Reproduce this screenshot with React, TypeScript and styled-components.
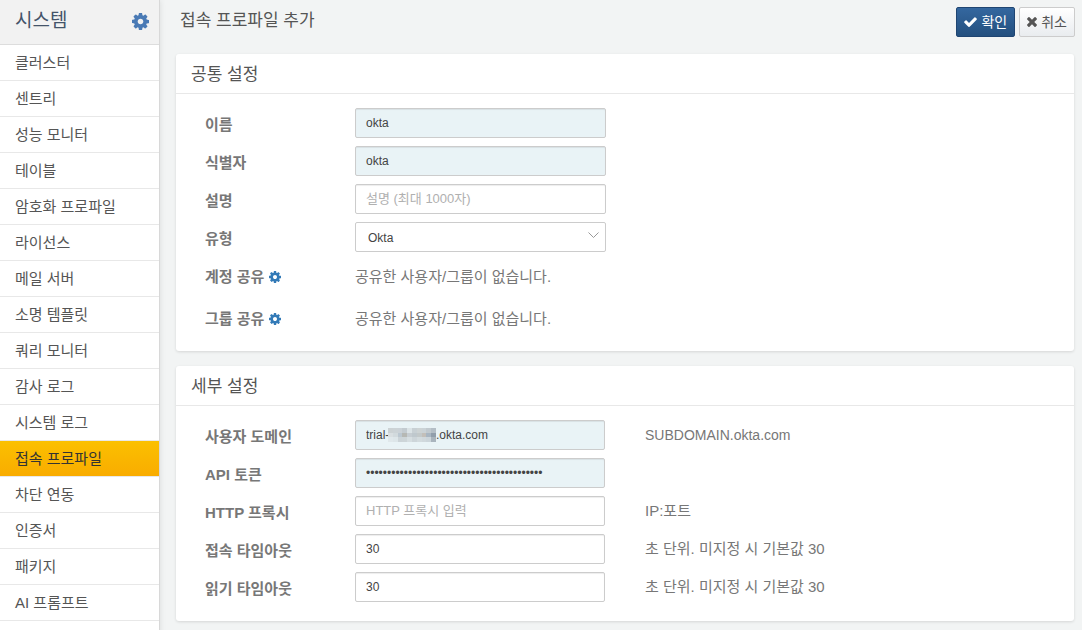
import React from 'react';
import styled, { createGlobalStyle } from 'styled-components';

const GlobalStyle = createGlobalStyle`
  * { box-sizing: border-box; }
  body {
    margin: 0;
    background: #f2f4f4;
    color: #555;
    font-family: "Liberation Sans", "Noto Sans CJK KR", sans-serif;
    font-size: 15px;
  }
  button, input, select { font-family: inherit; }
`;

const Page = styled.div`
  display: flex;
  min-height: 100vh;
`;

const Sidebar = styled.nav`
  flex: 0 0 160px;
  background: #fff;
  border-right: 1px solid #d8d8d8;
  box-shadow: 0 0 6px rgba(0, 0, 0, 0.1);
`;

const SidebarHeader = styled.div`
  display: flex;
  align-items: center;
  justify-content: space-between;
  height: 45px;
  padding: 0 10px 2px 15px;
  background: #f2f2f2;
  border-bottom: 1px solid #ddd;
`;

const SidebarTitle = styled.h2`
  margin: 0;
  font-size: 19px;
  font-weight: 400;
  line-height: 24px;
  color: #44546a;
`;

const IconButton = styled.button<{ $color: string }>`
  display: inline-flex;
  padding: 0;
  border: 0;
  background: none;
  color: ${(p) => p.$color};
  cursor: pointer;
`;

const Menu = styled.ul`
  margin: 0;
  padding: 0;
  list-style: none;
`;

const MenuLink = styled.a<{ $active: boolean }>`
  display: flex;
  align-items: center;
  height: 36px;
  padding: 0 15px 2px;
  border-bottom: 1px solid #e8e8e8;
  background: ${(p) => (p.$active ? 'linear-gradient(#fbc000, #f9ac00)' : '#fff')};
  color: ${(p) => (p.$active ? '#333' : '#555')};
  text-decoration: none;
  white-space: nowrap;
`;

const Main = styled.main`
  flex: 1;
  min-width: 0;
  padding: 0 8px 8px 16px;
`;

const TopBar = styled.header`
  display: flex;
  align-items: center;
  gap: 4px;
  height: 54px;
  margin-right: -1px;
  padding: 0 0 10px 4px;
`;

const PageTitle = styled.h1`
  flex: 1;
  margin: 0;
  padding-bottom: 2px;
  font-size: 17px;
  font-weight: 400;
  line-height: 24px;
  color: #555;
`;

const ActionButton = styled.button<{ $primary?: boolean }>`
  display: flex;
  align-items: center;
  gap: 4px;
  height: 30px;
  padding: 0 7px;
  border: 1px solid ${(p) => (p.$primary ? '#1f4572' : '#ccc')};
  border-radius: 2px;
  background: ${(p) =>
    p.$primary ? 'linear-gradient(#34679f, #24507f)' : 'linear-gradient(#fff, #e9ecef)'};
  color: ${(p) => (p.$primary ? '#fff' : '#555')};
  font-size: 14px;
  white-space: nowrap;
  cursor: pointer;
`;

const ButtonText = styled.span`
  padding-bottom: 3px;
`;

const Card = styled.section`
  margin-bottom: 15px;
  border-radius: 3px;
  background: #fff;
  box-shadow: 0 1px 3px rgba(0, 0, 0, 0.12);
`;

const CardTitle = styled.h2`
  height: 40px;
  margin: 0;
  padding: 1px 15px 0;
  border-bottom: 1px solid #e8e8e8;
  font-size: 17px;
  font-weight: 400;
  line-height: 39px;
  color: #555;
`;

const CardBody = styled.div<{ $bottom: number; $field: number }>`
  display: grid;
  grid-template-columns: 150px ${(p) => p.$field}px 1fr;
  row-gap: 8px;
  padding: 14px 29px ${(p) => p.$bottom}px;
`;

const Row = styled.div<{ $tall?: boolean }>`
  display: grid;
  grid-column: 1 / -1;
  grid-template-columns: subgrid;
  align-items: center;
  min-height: ${(p) => (p.$tall ? 34 : 30)}px;
  color: #777;
`;

const Label = styled.label`
  font-weight: 700;
`;

const ShareLabel = styled.div`
  display: flex;
  align-items: center;
  gap: 5px;
  font-weight: 700;
`;

const ShareText = styled.span`
  padding-bottom: 3px;
`;

const ShareValue = styled(ShareText)`
  grid-column: 2 / -1;
`;

const Hint = styled.span<{ $latin?: boolean }>`
  padding: 0 0 ${(p) => (p.$latin ? 0 : 3)}px 40px;
  font-size: ${(p) => (p.$latin ? 14 : 15)}px;
`;

const Input = styled.input<{ $filled?: boolean }>`
  width: 100%;
  height: 30px;
  padding: 0 10px;
  border: 1px solid #ccc;
  border-radius: 2px;
  outline: none;
  background: ${(p) => (p.$filled ? '#e9f3f6' : '#fff')};
  box-shadow: inset 0 1px 1px rgba(0, 0, 0, 0.075);
  color: #444;
  font-size: 12px;
  &::placeholder { color: #b0b0b0; font-size: 13px; }
`;

const FieldBox = styled.div`
  position: relative;
`;

const Select = styled.select`
  display: block;
  width: 100%;
  height: 30px;
  padding: 1px 12px 0;
  border: 1px solid #ccc;
  border-radius: 2px;
  appearance: none;
  background: #fff;
  color: #444;
  font-size: 12px;
`;

const Chevron = styled.svg`
  position: absolute;
  top: 10px;
  right: 7px;
  pointer-events: none;
`;

const Mosaic = styled.svg`
  position: absolute;
  top: 8px;
  left: 33px;
  pointer-events: none;
`;

function CogIcon({ size }: { size: number }) {
  return (
    <svg width={size} height={size} viewBox="0 128 1536 1536" fill="currentColor" aria-hidden="true">
      <path d="M1024 896q0-106-75-181t-181-75-181 75-75 181 75 181 181 75 181-75 75-181zm512-109v222q0 12-8 23t-20 13l-185 28q-19 54-39 91 35 50 107 138 10 12 10 25t-9 23q-27 37-99 108t-94 71q-12 0-26-9l-138-108q-44 23-91 38-16 136-29 186-7 28-36 28h-222q-14 0-24.500-8.500t-11.500-21.500l-28-184q-49-16-90-37l-141 107q-10 9-25 9-14 0-25-11-126-114-165-168-7-10-7-23 0-12 8-23 15-21 51-66.500t54-70.500q-27-50-41-99l-183-27q-13-2-21-12.500t-8-23.500v-222q0-12 8-23t19-13l186-28q14-46 39-92-40-57-107-138-10-12-10-24 0-10 9-23 26-36 98.500-107.500t94.500-71.500q13 0 26 10l138 107q44-23 91-38 16-136 29-186 7-28 36-28h222q14 0 24.500 8.500t11.500 21.500l28 184q49 16 90 37l142-107q9-9 24-9 13 0 25 10 129 119 165 170 7 8 7 22 0 12-8 23-15 21-51 66.500t-54 70.500q26 50 41 98l183 28q13 2 21 12.500t8 23.500z" />
    </svg>
  );
}

function CheckIcon() {
  return (
    <svg width="13" height="10" viewBox="121 300 1550 1222" fill="currentColor" aria-hidden="true">
      <path d="M1671 566q0 40-28 68l-724 724-136 136q-28 28-68 28t-68-28l-136-136-362-362q-28-28-28-68t28-68l136-136q28-28 68-28t68 28l294 295 656-657q28-28 68-28t68 28l136 136q28 28 28 68z" />
    </svg>
  );
}

function TimesIcon() {
  return (
    <svg width="10" height="10" viewBox="302 366 1188 1188" fill="currentColor" aria-hidden="true">
      <path d="M1490 1322q0 40-28 68l-136 136q-28 28-68 28t-68-28l-294-294-294 294q-28 28-68 28t-68-28l-136-136q-28-28-28-68t28-68l294-294-294-294q-28-28-28-68t28-68l136-136q28-28 68-28t68 28l294 294 294-294q28-28 68-28t68 28l136 136q28 28 28 68t-28 68l-294 294 294 294q28 28 28 68z" />
    </svg>
  );
}

const menuItems = [
  '클러스터', '센트리', '성능 모니터', '테이블', '암호화 프로파일', '라이선스',
  '메일 서버', '소명 템플릿', '쿼리 모니터', '감사 로그', '시스템 로그',
  '접속 프로파일', '차단 연동', '인증서', '패키지', 'AI 프롬프트',
];

const mosaicRows = [
  ['#ccd2d4', '#ccd3d6', '#cbd2d7', '#c3cbd0', '#dbe3e6', '#c8d0d4', '#cdd3d4', '#cad2d6', '#c1c9ce', '#b4bec6'],
  ['#d9dfe1', '#d2dadd', '#bcc8d1', '#b6b8b4', '#c6cdd2', '#bfc8cd', '#c3c9ca', '#c3bfb9', '#a9b6c2', '#919eab'],
  ['#e0e8eb', '#dde6e9', '#ccd4d8', '#cdd5d8', '#d6dee1', '#cdd5d9', '#d3dbde', '#d0d8dc', '#ccd5da', '#a9b4bd'],
];

const maskedDomain = `trial-${'\u00a0'.repeat(14)}.okta.com`;

export default function App() {
  return (
    <>
      <GlobalStyle />
      <Page>
        <Sidebar>
          <SidebarHeader>
            <SidebarTitle>시스템</SidebarTitle>
            <IconButton type="button" aria-label="시스템 설정" $color="#4a7ab5"><CogIcon size={17} /></IconButton>
          </SidebarHeader>
          <Menu>
            {menuItems.map((item) => (
              <li key={item}>
                <MenuLink href="#" $active={item === '접속 프로파일'}>{item}</MenuLink>
              </li>
            ))}
          </Menu>
        </Sidebar>
        <Main>
          <TopBar>
            <PageTitle>접속 프로파일 추가</PageTitle>
            <ActionButton type="button" $primary><CheckIcon /><ButtonText>확인</ButtonText></ActionButton>
            <ActionButton type="button"><TimesIcon /><ButtonText>취소</ButtonText></ActionButton>
          </TopBar>
          <Card>
            <CardTitle>공통 설정</CardTitle>
            <CardBody $bottom={15} $field={251}>
              <Row>
                <Label htmlFor="name">이름</Label>
                <Input id="name" $filled defaultValue="okta" />
              </Row>
              <Row>
                <Label htmlFor="identifier">식별자</Label>
                <Input id="identifier" $filled defaultValue="okta" />
              </Row>
              <Row>
                <Label htmlFor="description">설명</Label>
                <Input id="description" placeholder="설명 (최대 1000자)" />
              </Row>
              <Row>
                <Label htmlFor="type">유형</Label>
                <FieldBox>
                  <Select id="type" defaultValue="Okta"><option>Okta</option></Select>
                  <Chevron width="11" height="7" viewBox="0 0 11 7" fill="none" stroke="#999">
                    <path d="M0.5 0.5 L5.5 5.5 L10.5 0.5" />
                  </Chevron>
                </FieldBox>
              </Row>
              {['계정 공유', '그룹 공유'].map((title) => (
                <Row key={title} $tall>
                  <ShareLabel>
                    <ShareText>{title}</ShareText>
                    <IconButton type="button" aria-label={title} $color="#337ab7"><CogIcon size={12} /></IconButton>
                  </ShareLabel>
                  <ShareValue>공유한 사용자/그룹이 없습니다.</ShareValue>
                </Row>
              ))}
            </CardBody>
          </Card>
          <Card>
            <CardTitle>세부 설정</CardTitle>
            <CardBody $bottom={19} $field={250}>
              <Row>
                <Label htmlFor="domain">사용자 도메인</Label>
                <FieldBox>
                  <Input id="domain" $filled defaultValue={maskedDomain} />
                  <Mosaic width="48" height="14" viewBox="0 0 10 3" preserveAspectRatio="none" shapeRendering="crispEdges">
                    {mosaicRows.map((row, y) =>
                      row.map((fill, x) => <rect key={`${x}-${y}`} x={x} y={y} width="1" height="1" fill={fill} />),
                    )}
                  </Mosaic>
                </FieldBox>
                <Hint $latin>SUBDOMAIN.okta.com</Hint>
              </Row>
              <Row>
                <Label htmlFor="token">API 토큰</Label>
                <Input id="token" type="password" $filled defaultValue={'x'.repeat(42)} />
              </Row>
              <Row>
                <Label htmlFor="proxy">HTTP 프록시</Label>
                <Input id="proxy" placeholder="HTTP 프록시 입력" />
                <Hint>IP:포트</Hint>
              </Row>
              <Row>
                <Label htmlFor="connect-timeout">접속 타임아웃</Label>
                <Input id="connect-timeout" defaultValue="30" />
                <Hint>초 단위. 미지정 시 기본값 30</Hint>
              </Row>
              <Row>
                <Label htmlFor="read-timeout">읽기 타임아웃</Label>
                <Input id="read-timeout" defaultValue="30" />
                <Hint>초 단위. 미지정 시 기본값 30</Hint>
              </Row>
            </CardBody>
          </Card>
        </Main>
      </Page>
    </>
  );
}
